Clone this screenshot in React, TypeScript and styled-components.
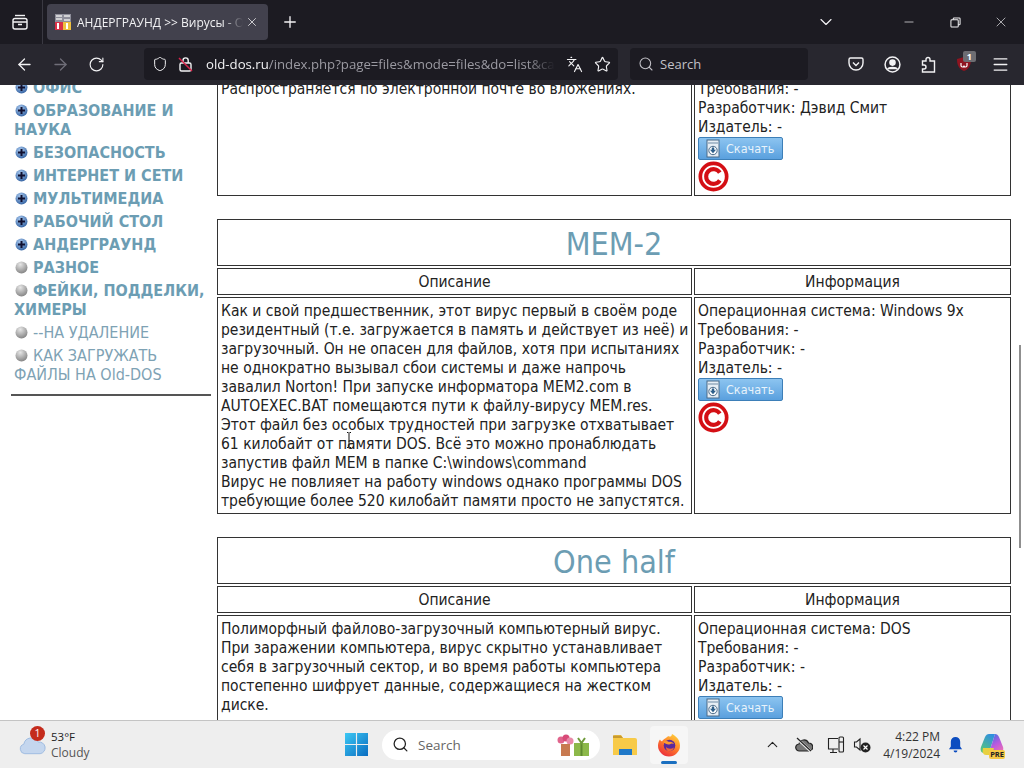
import React from 'react';
import styled, { createGlobalStyle } from 'styled-components';
import {
  ArrowLeft, ArrowRight, RotateCw, Shield, Languages, Star, Search,
  Menu, ChevronDown, Minus, X, Plus, ChevronUp,
} from 'lucide-react';

const GlobalStyle = createGlobalStyle`
  html, body { margin: 0; padding: 0; height: 100%; overflow: hidden; }
  body { font-family: 'DejaVu Sans', 'Liberation Sans', sans-serif; background: #fff; }
`;

type Virus = {
  title: string;
  description: string[];
  os: string;
  copyright?: boolean;
};

const viruses: Virus[] = [
  {
    title: 'MEM-2',
    description: [
      'Как и свой предшественник, этот вирус первый в своём роде',
      'резидентный (т.е. загружается в память и действует из неё) и',
      'загрузочный. Он не опасен для файлов, хотя при испытаниях',
      'не однократно вызывал сбои системы и даже напрочь',
      'завалил Norton! При запуске информатора MEM2.com в',
      'AUTOEXEC.BAT помещаются пути к файлу-вирусу MEM.res.',
      'Этот файл без особых трудностей при загрузке отхватывает',
      '61 килобайт от памяти DOS. Всё это можно пронаблюдать',
      'запустив файл MEM в папке C:\\windows\\command',
      'Вирус не повлияет на работу windows однако программы DOS',
      'требующие более 520 килобайт памяти просто не запустятся.',
    ],
    os: 'Windows 9x',
    copyright: true,
  },
  {
    title: 'One half',
    description: [
      'Полиморфный файлово-загрузочный компьютерный вирус.',
      'При заражении компьютера, вирус скрытно устанавливает',
      'себя в загрузочный сектор, и во время работы компьютера',
      'постепенно шифрует данные, содержащиеся на жестком',
      'диске.',
    ],
    os: 'DOS',
  },
];

const menu: { label: string; open: boolean; bold: boolean }[] = [
  { label: 'ОФИС', open: true, bold: true },
  { label: 'ОБРАЗОВАНИЕ И НАУКА', open: true, bold: true },
  { label: 'БЕЗОПАСНОСТЬ', open: true, bold: true },
  { label: 'ИНТЕРНЕТ И СЕТИ', open: true, bold: true },
  { label: 'МУЛЬТИМЕДИА', open: true, bold: true },
  { label: 'РАБОЧИЙ СТОЛ', open: true, bold: true },
  { label: 'АНДЕРГРАУНД', open: true, bold: true },
  { label: 'РАЗНОЕ', open: false, bold: true },
  { label: 'ФЕЙКИ, ПОДДЕЛКИ, ХИМЕРЫ', open: false, bold: true },
  { label: '--НА УДАЛЕНИЕ', open: false, bold: false },
  { label: 'КАК ЗАГРУЖАТЬ ФАЙЛЫ НА Old-DOS', open: false, bold: false },
];

const Bullet: React.FC<{ open: boolean }> = ({ open }) => (
  <BulletSvg viewBox="0 0 13 13" width="13" height="13">
    <defs>
      <radialGradient id="bl" cx="40%" cy="30%" r="80%">
        <stop offset="0" stopColor="#a8c8ee" />
        <stop offset="1" stopColor="#2a5a9c" />
      </radialGradient>
      <radialGradient id="gr" cx="40%" cy="25%" r="80%">
        <stop offset="0" stopColor="#e6e6e6" />
        <stop offset="1" stopColor="#808080" />
      </radialGradient>
    </defs>
    <circle cx="6.5" cy="6.5" r="6" fill={open ? 'url(#bl)' : 'url(#gr)'} />
    {open ? <path d="M6.5 3v7M3 6.5h7" stroke="#101030" strokeWidth="2" /> : null}
  </BulletSvg>
);

const DownloadButton: React.FC = () => (
  <Download>
    <DownloadIcon viewBox="0 0 14 20" width="14" height="20">
      <rect x="1" y="1" width="12" height="17" fill="#e6eef5" stroke="#4a6a88" />
      <path d="M2 4h10" stroke="#6f8ba5" />
      <circle cx="7" cy="11.500" r="4.200" fill="#f8fbfd" stroke="#4a6a88" />
      <path d="M5.800 8.500h2.400v2.200H10L7 14.200 4 10.700h1.800z" fill="#2e5f8a" />
    </DownloadIcon>
    Скачать
  </Download>
);

const CopyrightMark: React.FC = () => (
  <CopyrightSvg viewBox="0 0 32 32" width="31" height="31">
    <circle cx="16" cy="16" r="13.6" fill="none" stroke="#d40f14" strokeWidth="3.8" />
    <path d="M22.500 12a7.600 7.600 0 1 0 0 8" fill="none" stroke="#d40f14" strokeWidth="4.200" />
  </CopyrightSvg>
);

const InfoLines: React.FC<{ os?: string; dev: string }> = ({ os, dev }) => (
  <>
    {os ? <div>Операционная система: {os}</div> : null}
    <div>Требования: -</div>
    <div>Разработчик: {dev}</div>
    <div>Издатель: -</div>
    <DownloadButton />
  </>
);

const Columns: React.FC = () => (
  <colgroup>
    <col width="475" />
    <col width="317" />
  </colgroup>
);

const WinLogo: React.FC = () => (
  <svg viewBox="0 0 24 24" width="23" height="23">
    <defs>
      <linearGradient id="win" x1="0" y1="0" x2="1" y2="1">
        <stop offset="0" stopColor="#3cc8f4" />
        <stop offset="1" stopColor="#0a6cc0" />
      </linearGradient>
    </defs>
    <path d="M0 0h11.400v11.400H0zM12.600 0H24v11.400H12.600zM0 12.600h11.400V24H0zM12.600 12.600H24V24H12.600z" fill="url(#win)" />
  </svg>
);

const FirefoxLogo: React.FC = () => (
  <svg viewBox="0 0 24 24" width="24" height="24">
    <defs>
      <linearGradient id="fx" x1="0.800" y1="0" x2="0.200" y2="1">
        <stop offset="0" stopColor="#ffd23a" />
        <stop offset="0.500" stopColor="#ff7a2a" />
        <stop offset="1" stopColor="#e8263e" />
      </linearGradient>
    </defs>
    <path d="M15 1c5 2.500 8 6.500 8 11.500A11 11 0 0 1 1 12.500C1 10 2 7.500 3 6.500c.5 1 1 1.500 2 2C6.500 5.500 10 5 11 3c2 1 3.500 1 4-2z" fill="url(#fx)" />
    <circle cx="12.500" cy="12.500" r="5.800" fill="#5a2a9c" />
    <path d="M6 9c2-1.500 4.500-1.500 6 0 1.500-.5 3.500 0 5 2-1.500-.8-3-.8-4 .2-2 .5-4.500 0-7-2.200z" fill="#ff9a2e" />
    <path d="M9 14c2 2 5 2.300 8 .5-1 2.800-3 4-5 3.800S9 16.500 9 14z" fill="#f0653a" />
  </svg>
);

const App: React.FC = () => (
  <Screen>
    <GlobalStyle />
    <TabBar>
      <TabListButton>
        <svg viewBox="0 0 18 18" width="18" height="18" fill="none" stroke="currentColor" strokeWidth="1.400">
          <path d="M4 2.500h10" />
          <rect x="2" y="5.500" width="14" height="10.500" rx="2" />
          <path d="M2 9h14M7 11.500h4" />
        </svg>
      </TabListButton>
      <TabDivider />
      <Tab>
        <Favicon viewBox="0 0 16 16" width="16" height="16">
          <rect x="0" y="0" width="16" height="8" fill="#8e8e9a" />
          <path d="M1 2h6M1 5h6M9 2h6M9 6h6" stroke="#e8e8e8" strokeWidth="1.400" />
          <rect x="0" y="8" width="8" height="8" fill="#d83048" />
          <rect x="8" y="8" width="8" height="8" fill="#eec040" />
          <path d="M3 9v6M12 9v6" stroke="#fff" strokeWidth="2" />
        </Favicon>
        <TabTitle>АНДЕРГРАУНД &gt;&gt; Вирусы - Old-DOS</TabTitle>
        <TabClose><X size={14} strokeWidth={1.4} /></TabClose>
      </Tab>
      <NewTab><Plus size={18} strokeWidth={1.8} /></NewTab>
      <TabSpacer />
      <TabsMenu><ChevronDown size={20} strokeWidth={1.4} /></TabsMenu>
      <WindowButton><Minus size={14} strokeWidth={1.2} /></WindowButton>
      <WindowButton>
        <svg viewBox="0 0 12 12" width="11" height="11" fill="none" stroke="currentColor" strokeWidth="1.100">
          <rect x="1" y="3" width="8" height="8" rx="1" />
          <path d="M3.500 3V2a1 1 0 0 1 1-1H10a1 1 0 0 1 1 1v5.500a1 1 0 0 1-1 1H9" />
        </svg>
      </WindowButton>
      <WindowButton><X size={16} strokeWidth={1} /></WindowButton>
    </TabBar>
    <NavBar>
      <NavIcon><ArrowLeft size={19} strokeWidth={1.6} /></NavIcon>
      <NavIcon $dim><ArrowRight size={19} strokeWidth={1.6} /></NavIcon>
      <NavIcon><RotateCw size={17} strokeWidth={1.6} /></NavIcon>
      <UrlBar>
        <Shield size={16} strokeWidth={1.5} />
        <LockIcon viewBox="0 0 16 16" width="16" height="16">
          <rect x="2" y="7" width="11" height="8" rx="1.500" fill="none" stroke="#f2f2f4" strokeWidth="1.400" />
          <path d="M5 7V4.500a2.600 2.600 0 0 1 5.200 0V7" fill="none" stroke="#f2f2f4" strokeWidth="1.400" />
          <path d="M1 2l13 13" stroke="#d8234a" strokeWidth="1.500" />
        </LockIcon>
        <UrlText><b>old-dos.ru</b>/index.php?page=files&amp;mode=files&amp;do=list&amp;ca</UrlText>
        <Languages size={17} strokeWidth={1.6} />
        <Star size={17} strokeWidth={1.6} />
      </UrlBar>
      <SearchBar>
        <Search size={16} strokeWidth={1.6} />
        <span>Search</span>
      </SearchBar>
      <Tools>
        <NavIcon>
          <svg viewBox="0 0 16 16" width="16" height="16" fill="none" stroke="currentColor" strokeWidth="1.400">
            <path d="M2.500 2h11A1.500 1.500 0 0 1 15 3.500V7a7 7 0 0 1-14 0V3.500A1.500 1.500 0 0 1 2.500 2z" />
            <path d="M5 6.500l3 3 3-3" />
          </svg>
        </NavIcon>
        <NavIcon>
          <svg viewBox="0 0 16 16" width="17" height="17" fill="none" stroke="currentColor" strokeWidth="1.400">
            <circle cx="8" cy="8" r="7" />
            <circle cx="8" cy="6.200" r="2.400" fill="currentColor" />
            <path d="M3.500 12.500c1-2.400 8-2.400 9 0" fill="currentColor" />
          </svg>
        </NavIcon>
        <NavIcon>
          <svg viewBox="0 0 16 17" width="16" height="17" fill="none" stroke="currentColor" strokeWidth="1.400">
            <path d="M6 5V3.500a2 2 0 0 1 4 0V5h4.500v11H2.500v-3H4a2 2 0 0 0 0-4H2.500V5z" />
          </svg>
        </NavIcon>
        <NavIcon>
          <svg viewBox="0 0 16 16" width="16" height="16">
            <path d="M1 3l7-2 7 2c0 6-2 10-7 12C3 13 1 9 1 3z" fill="#8f1420" />
            <path d="M5 7v2.500a1.500 1.500 0 0 0 3 0 1.500 1.500 0 0 0 3 0V7" fill="none" stroke="#fff" strokeWidth="1.200" />
          </svg>
          <Badge>1</Badge>
        </NavIcon>
        <NavIcon><Menu size={19} strokeWidth={1.6} /></NavIcon>
      </Tools>
    </NavBar>
    <Viewport>
      <Page>
        <Sidebar>
          {menu.map((item) => (
            <MenuItem key={item.label} $bold={item.bold}>
              <Bullet open={item.open} />
              {item.label}
            </MenuItem>
          ))}
          <SideRule />
        </Sidebar>
        <Main>
          <FileTable>
            <Columns />
            <tbody>
              <tr>
                <BodyCell>Распространяется по электронной почте во вложениях.</BodyCell>
                <BodyCell>
                  <InfoLines dev="Дэвид Смит" />
                  <CopyrightMark />
                </BodyCell>
              </tr>
            </tbody>
          </FileTable>
          {viruses.map((v) => (
            <FileTable key={v.title}>
              <Columns />
              <tbody>
                <tr><TitleCell colSpan={2}>{v.title}</TitleCell></tr>
                <tr>
                  <HeadCell>Описание</HeadCell>
                  <HeadCell>Информация</HeadCell>
                </tr>
                <tr>
                  <BodyCell $lowered>
                    {v.description.map((line) => <div key={line}>{line}</div>)}
                  </BodyCell>
                  <BodyCell $lowered>
                    <InfoLines os={v.os} dev="-" />
                    {v.copyright ? <CopyrightMark /> : null}
                  </BodyCell>
                </tr>
              </tbody>
            </FileTable>
          ))}
        </Main>
      </Page>
      <ScrollThumb />
      <Pointer viewBox="0 0 10 16" width="10" height="16">
        <path d="M3 .5h1.500M5.500 .5H7M5 1v14M3 15.500h1.500M5.500 15.500H7" stroke="#111" strokeWidth="1" fill="none" />
      </Pointer>
    </Viewport>
    <Taskbar>
      <Weather>
        <WeatherIcon>
          <svg viewBox="0 0 28 20" width="27" height="20">
            <path d="M6 19a5 5 0 0 1-1-9.800A8 8 0 0 1 20 7a6 6 0 0 1 2 12z" fill="#c4d6ee" stroke="#9dbae0" />
          </svg>
          <WeatherBadge>1</WeatherBadge>
        </WeatherIcon>
        <WeatherText>
          <span>53°F</span>
          <small>Cloudy</small>
        </WeatherText>
      </Weather>
      <WinLogo />
      <TaskSearch>
        <Search size={17} strokeWidth={1.8} color="#222" />
        <span>Search</span>
        <Gifts viewBox="0 0 34 22" width="34" height="22">
          <circle cx="5" cy="6" r="3.500" fill="#e0648c" />
          <circle cx="10" cy="4" r="3.500" fill="#d84a78" />
          <circle cx="14" cy="7" r="3.500" fill="#e88aa8" />
          <rect x="5" y="10" width="9" height="12" fill="#c87a50" />
          <rect x="18" y="9" width="15" height="13" fill="#8cb84a" />
          <path d="M25.500 9v13" stroke="#5f8a30" strokeWidth="2" />
          <path d="M22 4l3.500 5L29 4" fill="none" stroke="#6f9a3a" strokeWidth="2" />
        </Gifts>
      </TaskSearch>
      <FolderIcon viewBox="0 0 24 24" width="24" height="24">
        <path d="M0 4a2 2 0 0 1 2-2h6l2 3h12a2 2 0 0 1 2 2v15H0z" fill="#f7ca48" />
        <path d="M0 2.500h8l2 2.500H0z" fill="#c89a30" />
        <rect x="6" y="16" width="13" height="6" fill="#1f78c8" />
      </FolderIcon>
      <ActiveTask><FirefoxLogo /><ActiveBar /></ActiveTask>
      <Tray>
        <ChevronUp size={17} strokeWidth={1.6} />
        <svg viewBox="0 0 18 16" width="18" height="16">
          <path d="M4.500 14a3.500 3.500 0 0 1-.5-7 5 5 0 0 1 9.500-1A4 4 0 0 1 14 14z" fill="#777" stroke="#222" strokeWidth="1.200" />
          <path d="M2 1.500l14 13" stroke="#eee" strokeWidth="2.600" />
          <path d="M2 1l14 13" stroke="#222" strokeWidth="1.200" />
        </svg>
        <svg viewBox="0 0 18 18" width="18" height="18" fill="none" stroke="#222" strokeWidth="1.100">
          <path d="M11 13H1.500V2.500H11M6 13v3M3 16.500h7" />
          <rect x="12" y="1" width="4.500" height="15" rx="1" />
          <path d="M12 6h4.500" />
        </svg>
        <SpeakerIcon viewBox="0 0 18 18" width="18" height="18">
          <path d="M7 3L3.500 6H1.500v5h2L7 14z" fill="none" stroke="#222" strokeWidth="1.100" />
          <circle cx="12.500" cy="11.500" r="5" fill="#222" />
          <path d="M10.500 9.500l4 4M14.500 9.500l-4 4" stroke="#fff" strokeWidth="1.200" />
        </SpeakerIcon>
        <Clock><span>4:22 PM</span><span>4/19/2024</span></Clock>
        <BellIcon viewBox="0 0 16 18" width="15" height="17">
          <path d="M8 1a5 5 0 0 1 5 5v5l2 3H1l2-3V6a5 5 0 0 1 5-5z" fill="#0c4dc0" />
          <path d="M6 15.500h4a2 2 0 0 1-4 0z" fill="#0c4dc0" />
        </BellIcon>
        <Copilot>
          <svg viewBox="0 0 24 24" width="24" height="24">
            <defs>
              <linearGradient id="cpa" x1="0.700" y1="0" x2="0.200" y2="1">
                <stop offset="0" stopColor="#2f8fe0" />
                <stop offset="1" stopColor="#58c878" />
              </linearGradient>
              <linearGradient id="cpb" x1="0.300" y1="0" x2="0.800" y2="1">
                <stop offset="0" stopColor="#4a70e0" />
                <stop offset="0.500" stopColor="#b85ae0" />
                <stop offset="1" stopColor="#f070b0" />
              </linearGradient>
            </defs>
            <path d="M9 1h6L9 20H4C1 20 0 17 1 14L5 4c1-2 2-3 4-3z" fill="url(#cpa)" />
            <path d="M15 1c2 0 3 1 4 3l4 10c1 3-1 6-3.500 6H9z" fill="url(#cpb)" />
            <path d="M3 15h11l-2 7H6c-3 0-4-3-3-7z" fill="#e8d040" />
          </svg>
          <PreTag>PRE</PreTag>
        </Copilot>
      </Tray>
    </Taskbar>
  </Screen>
);

export default App;

const Screen = styled.div`
  width: 1024px;
  height: 768px;
  display: flex;
  flex-direction: column;
  overflow: hidden;
`;

const TabBar = styled.div`
  height: 44px;
  flex: none;
  background: #1c1b22;
  color: #f2f2f4;
  display: flex;
  align-items: center;
`;

const TabListButton = styled.div`
  width: 40px;
  display: flex;
  justify-content: center;
`;

const TabDivider = styled.div`
  width: 1px;
  height: 44px;
  margin: 0 4px 0 2px;
  background: #3a3942;
`;

const Tab = styled.div`
  width: 221px;
  height: 36px;
  padding-left: 8px;
  box-sizing: border-box;
  border-radius: 4px;
  background: #42414d;
  display: flex;
  align-items: center;
  gap: 6px;
  flex: none;
`;

const Favicon = styled.svg`
  flex: none;
`;

const TabTitle = styled.div`
  width: 166px;
  flex: none;
  overflow: hidden;
  white-space: nowrap;
  font: 12px 'Open Sans', sans-serif;
  -webkit-mask-image: linear-gradient(to right, #000 88%, transparent);
  mask-image: linear-gradient(to right, #000 88%, transparent);
`;

const TabClose = styled.div`
  display: flex;
  margin-left: -4px;
  color: #e8e8ea;
`;

const NewTab = styled.div`
  width: 44px;
  display: flex;
  justify-content: center;
`;

const TabSpacer = styled.div`
  flex: 1;
`;

const TabsMenu = styled.div`
  width: 40px;
  margin-right: 40px;
  display: flex;
  justify-content: center;
`;

const WindowButton = styled.div`
  width: 46px;
  display: flex;
  justify-content: center;
`;

const NavBar = styled.div`
  height: 41px;
  flex: none;
  box-sizing: border-box;
  padding: 0 0 1px 6px;
  background: #28272f;
  color: #f2f2f4;
  display: flex;
  align-items: center;
`;

const NavIcon = styled.div<{ $dim?: boolean }>`
  position: relative;
  width: 36px;
  height: 32px;
  display: flex;
  align-items: center;
  justify-content: center;
  color: ${(p) => (p.$dim ? '#6f6e78' : '#f2f2f4')};
`;

const UrlBar = styled.div`
  width: 474px;
  height: 32px;
  margin-left: 30px;
  padding: 0 7px 0 8px;
  box-sizing: border-box;
  border-radius: 4px;
  background: #1c1b22;
  display: flex;
  align-items: center;
  gap: 11px;
  flex: none;
`;

const LockIcon = styled.svg`
  flex: none;
  margin-left: -1px;
`;

const UrlText = styled.div`
  flex: 1;
  min-width: 0;
  margin-left: 1px;
  overflow: hidden;
  white-space: nowrap;
  font: 13.200px 'Open Sans', sans-serif;
  color: #9b9aa2;
  -webkit-mask-image: linear-gradient(to right, #000 92%, transparent);
  mask-image: linear-gradient(to right, #000 92%, transparent);

  b {
    font-weight: 400;
    color: #f2f2f4;
  }
`;

const SearchBar = styled.div`
  width: 178px;
  height: 32px;
  margin-left: 12px;
  padding-left: 8px;
  box-sizing: border-box;
  border-radius: 4px;
  background: #1c1b22;
  display: flex;
  align-items: center;
  gap: 6px;
  flex: none;
  font: 13px 'Open Sans', sans-serif;
  color: #c2c1c7;
`;

const Tools = styled.div`
  display: flex;
  margin-left: 30px;
`;

const Badge = styled.span`
  position: absolute;
  top: 3px;
  right: 6px;
  padding: 0 4px;
  border-radius: 2px;
  background: #6d6d72;
  color: #fff;
  font: 700 9px/11px 'Open Sans', sans-serif;
`;

const Viewport = styled.div`
  position: relative;
  flex: 1;
  min-height: 0;
  overflow: hidden;
  background: #fff;
`;

const Page = styled.div`
  display: flex;
  align-items: flex-start;
  margin-top: -11px;
  padding-left: 11px;
`;

const Sidebar = styled.div`
  width: 200px;
  flex: none;
  margin-top: 4px;
`;

const MenuItem = styled.div<{ $bold?: boolean }>`
  width: 194px;
  margin: 0 0 4px 3px;
  font: ${(p) => (p.$bold ? 700 : 400)} 16px/19px 'DejaVu Sans', sans-serif;
  font-stretch: condensed;
  color: ${(p) => (p.$bold ? '#6c9db3' : '#7ea2b4')};
`;

const BulletSvg = styled.svg`
  margin: 0 5px -1px 1px;
`;

const SideRule = styled.div`
  height: 2px;
  margin-top: 10px;
  background: #555;
`;

const Main = styled.div`
  width: 798px;
  margin-left: 4px;
  flex: none;
`;

const FileTable = styled.table`
  width: 798px;
  table-layout: fixed;
  margin-bottom: 19px;
  border-spacing: 2px;
  border-collapse: separate;
  font: 15.500px/19px 'DejaVu Sans', sans-serif;
  font-stretch: condensed;
  color: #222;
`;

const Cell = styled.td`
  border: 1px solid #333;
  padding: 0;
`;

const TitleCell = styled(Cell)`
  height: 42px;
  padding-top: 3px;
  text-align: center;
  font-size: 32px;
  line-height: 42px;
  color: #6c9db3;
`;

const HeadCell = styled(Cell)`
  height: 24px;
  padding-top: 1px;
  text-align: center;
  line-height: 24px;
`;

const BodyCell = styled(Cell)<{ $lowered?: boolean }>`
  padding: ${(p) => (p.$lowered ? '4px 3px 2px' : '3px')};
  vertical-align: top;
  white-space: nowrap;
`;

const Download = styled.div`
  position: relative;
  width: 85px;
  height: 23px;
  box-sizing: border-box;
  border: 1px solid #3d7fb8;
  border-radius: 2px;
  background: linear-gradient(#8cc4f0, #5aa0de);
  color: #e8f3fb;
  display: flex;
  align-items: center;
  padding-left: 27px;
  font-size: 12.500px;
`;

const DownloadIcon = styled.svg`
  position: absolute;
  left: 7px;
  top: 1px;
`;

const CopyrightSvg = styled.svg`
  display: block;
  margin-top: 1px;
`;

const ScrollThumb = styled.div`
  position: absolute;
  top: 260px;
  right: 3px;
  width: 2px;
  height: 203px;
  background: #8f8f8f;
`;

const Pointer = styled.svg`
  position: absolute;
  left: 344px;
  top: 347px;
`;

const Taskbar = styled.div`
  height: 48px;
  flex: none;
  box-sizing: border-box;
  border-top: 1px solid #c4c4c4;
  background: #eeeeee;
  display: flex;
  align-items: center;
  color: #222;
`;

const Weather = styled.div`
  width: 345px;
  padding-left: 19px;
  display: flex;
  align-items: center;
  gap: 5px;
  box-sizing: border-box;
  flex: none;
`;

const WeatherIcon = styled.div`
  position: relative;
  width: 27px;
  height: 20px;
`;

const WeatherBadge = styled.span`
  position: absolute;
  top: -9px;
  left: 11px;
  width: 15px;
  height: 15px;
  border-radius: 50%;
  background: #c42b1c;
  color: #fff;
  text-align: center;
  font: 10.500px/15px 'Open Sans', sans-serif;
`;

const WeatherText = styled.div`
  display: flex;
  flex-direction: column;
  font: 11.500px/16px 'Open Sans', sans-serif;

  small {
    font-size: 12px;
    color: #555;
  }
`;

const TaskSearch = styled.div`
  width: 218px;
  height: 30px;
  margin-left: 14px;
  box-sizing: border-box;
  padding: 0 10px 0 10px;
  border-radius: 15px;
  background: #fff;
  display: flex;
  align-items: center;
  gap: 9px;
  flex: none;
  font: 13.500px 'Open Sans', sans-serif;
  color: #666;
`;

const Gifts = styled.svg`
  margin-left: auto;
`;

const FolderIcon = styled.svg`
  margin-left: 13px;
  flex: none;
`;

const ActiveTask = styled.div`
  position: relative;
  width: 38px;
  height: 38px;
  margin-left: 13px;
  border-radius: 4px;
  background: #f6f6f6;
  display: flex;
  align-items: center;
  justify-content: center;
  flex: none;
`;

const ActiveBar = styled.div`
  position: absolute;
  bottom: 0;
  left: 11px;
  width: 16px;
  height: 3px;
  border-radius: 2px;
  background: #1a6fc0;
`;

const Tray = styled.div`
  margin-left: auto;
  padding-right: 20px;
  display: flex;
  align-items: center;
  gap: 14px;
`;

const SpeakerIcon = styled.svg`
  margin-left: -6px;
`;

const Clock = styled.div`
  display: flex;
  flex-direction: column;
  align-items: flex-end;
  margin-left: -2px;
  font: 12px/17px 'Open Sans', sans-serif;
  color: #333;
`;

const BellIcon = styled.svg`
  margin-left: -6px;
`;

const Copilot = styled.div`
  position: relative;
  width: 24px;
  height: 24px;
  margin-left: 3px;
`;

const PreTag = styled.span`
  position: absolute;
  right: -1px;
  bottom: -2px;
  padding: 0 1px;
  border-radius: 2px;
  background: #f6c945;
  color: #222;
  font: 700 7.500px/9px 'Open Sans', sans-serif;
`;
